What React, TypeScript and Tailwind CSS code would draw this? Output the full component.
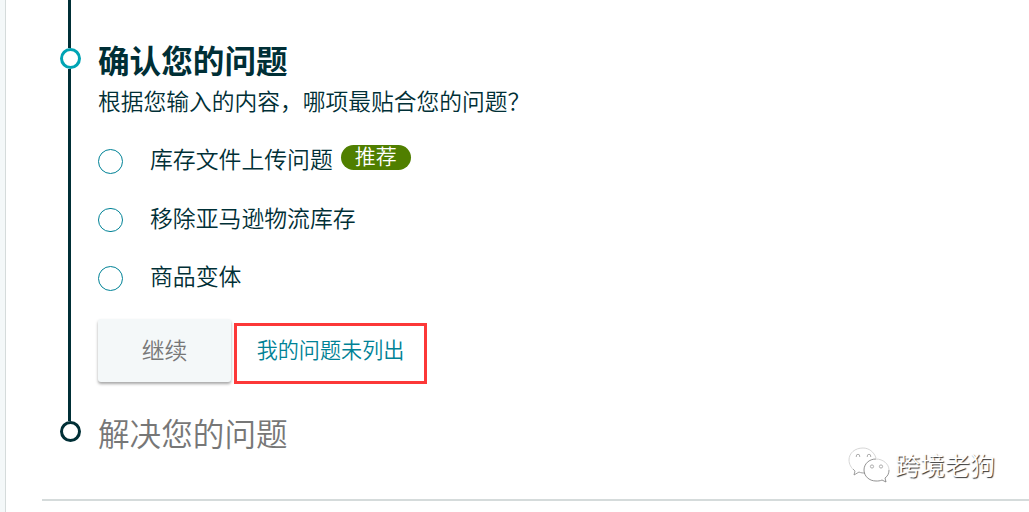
const options = [
  { label: '库存文件上传问题', recommended: true },
  { label: '移除亚马逊物流库存', recommended: false },
  { label: '商品变体', recommended: false },
];

const Rail = () => (
  <div className="flex w-[21px] shrink-0 flex-col">
    <div className="ml-2 h-12 w-[3px] bg-[#002f36]" />
    <div className="size-[21px] rounded-full border-3 border-[#00a4b4]" />
    <div className="ml-2 h-[352px] w-[3px] bg-[#002f36]" />
    <div className="size-[21px] rounded-full border-3 border-[#002f36]" />
  </div>
);

const Option = ({ label, recommended }: { label: string; recommended: boolean }) => (
  <label className="flex h-[58.5px] items-center">
    <span className="h-[24.5px] w-[25px] rounded-full border border-[#008296]" />
    <span className="mb-[6px] ml-[27px] text-[22.85px] leading-8">{label}</span>
    {recommended && (
      <span className="mb-[7px] ml-2 h-[25px] w-[70px] rounded-full bg-[#507f00] text-center text-[21px] leading-[21px] text-white">
        推荐
      </span>
    )}
  </label>
);

const Watermark = () => (
  <div className="absolute top-[445px] left-[848px] flex items-center">
    <svg width="42" height="38" viewBox="0 0 42 38" fill="none" stroke="#888" strokeWidth="0.8">
      <path
        stroke="#ccc"
        d="M7 26C3 23 1 19 1 15 1 8 7 3 15 3c6 0 11 4 13 10"
      />
      <path d="M5 24c1 1 2 2 2 2l-1 4 5-3c2 1 4 1 6 1" />
      <path stroke="#777" d="M28 14c-7 0-12 5-12 11s5 11 12 11c2 0 4 0 6-1l4 2-1-4c3-2 4-5 4-8" />
      <path stroke="#ccc" d="M28 14c7 0 13 5 13 11" />
      <path
        stroke="#999"
        d="M8.300 12v-1a1.700 1.700 0 0 1 3.400 0v1M19.300 12v-1a1.700 1.700 0 0 1 3.400 0v1"
      />
      <circle cx="24" cy="21.500" r="1.600" stroke="#999" />
      <circle cx="33" cy="21.500" r="1.600" stroke="#999" />
    </svg>
    <span className="ml-[5px] text-[25px] leading-9 whitespace-nowrap text-white [text-shadow:1px_1px_1px_#333]">
      跨境老狗
    </span>
  </div>
);

export default function App() {
  return (
    <div className="relative flex h-[512px] w-[1029px] overflow-hidden bg-white font-['Noto_Sans_CJK_SC',sans-serif] font-[350] text-[#002f36]">
      <div className="w-[6px] shrink-0 border-r border-[#d5dbdb] bg-[#f4f8f9]" />
      <main className="ml-9 flex flex-1 flex-col">
        <div className="flex h-[499px] pl-[18px]">
          <Rail />
          <section className="ml-[17px] flex-1">
            <h2 className="mt-[38px] text-[31.6px] leading-[42px] font-bold">确认您的问题</h2>
            <p className="mt-px text-[22.75px] leading-10">根据您输入的内容，哪项最贴合您的问题？</p>
            <div className="mt-[11px]">
              {options.map((option) => (
                <Option key={option.label} {...option} />
              ))}
            </div>
            <div className="mt-[11px] flex items-start">
              <button className="h-[63px] w-[133px] rounded-[3px] bg-[#f4f8f9] pb-[2px] text-[22.85px] text-[#777] shadow-[0_2px_3px_rgba(0,0,0,0.35)]">
                继续
              </button>
              <button className="mt-[4px] ml-[3px] h-[61px] w-[193px] border-3 border-[#fc3838] pb-[6px] text-[21.1px] text-[#008296]">
                我的问题未列出
              </button>
            </div>
            <h2 className="mt-[27px] text-[31.6px] leading-[42px] text-[#777]">解决您的问题</h2>
          </section>
        </div>
        <div className="h-[2px] bg-[#d5dbdb]" />
      </main>
      <Watermark />
    </div>
  );
}
